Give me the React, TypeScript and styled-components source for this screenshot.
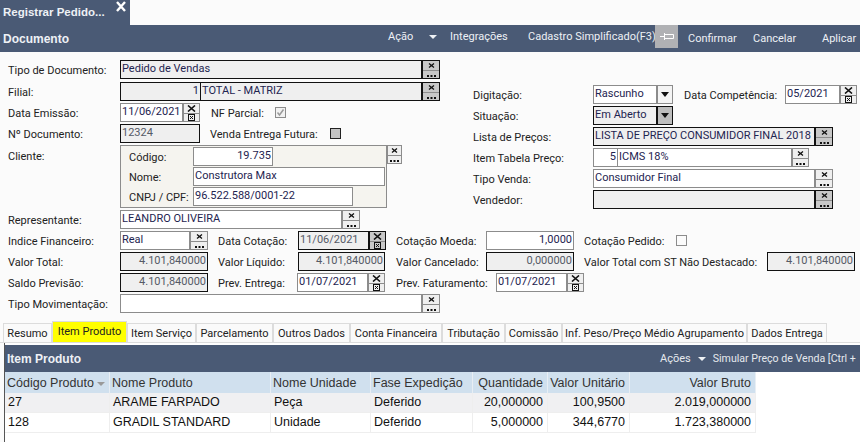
import React from "react";
import styled, { createGlobalStyle } from "styled-components";

const DARK = "#4a5a75";
const UI = `Roboto, "Liberation Sans", sans-serif`;
const ARIAL = `"Liberation Sans", Arial, sans-serif`;

const Global = createGlobalStyle`
  html, body { margin: 0; padding: 0; background: #fbfbfb; }
  #root { width: 860px; height: 442px; overflow: hidden; }
`;

const Page = styled.div`
  width: 860px; height: 442px; overflow: hidden; background: #fbfbfb;
  font-family: ${UI}; font-size: 11px; color: #222; display: flex; flex-direction: column;
`;
const TabTop = styled.div`
  width: 130px; height: 25px; background: ${DARK}; color: #fff; flex: none;
  display: flex; align-items: flex-start; box-sizing: border-box; padding-left: 3px;
`;
const TabTitle = styled.span`
  font: bold 11.5px ${ARIAL}; color: #eef1f5; line-height: 25px; width: 112px;
`;
const CloseIcon = styled.svg`
  width: 12px; height: 11px; margin-top: 1px; flex: none;
`;
const Bar = styled.div`
  height: 27px; background: ${DARK}; display: flex; align-items: center; flex: none;
  padding-left: 3px;
`;
const BarTitle = styled.span`
  font: bold 12px ${ARIAL}; color: #eef1f5; flex: 1; padding-top: 1px;
`;
const BarItem = styled.span<{ $ml: number; $up?: boolean; $w: number }>`
  color: #eef1f5; font-size: 11px; margin-left: ${(p) => p.$ml}px; width: ${(p) => p.$w}px; white-space: nowrap;
  margin-top: ${(p) => (p.$up ? -5 : 0)}px; flex: none;
`;
const Caret = styled.i<{ $ml: number; $up?: boolean }>`
  width: 0; height: 0; border-left: 4px solid transparent; border-right: 4px solid transparent;
  border-top: 4px solid #eef1f5; margin-left: ${(p) => p.$ml}px; flex: none;
  margin-top: ${(p) => (p.$up ? -4 : 0)}px;
`;
const Pin = styled.svg`
  width: 23px; height: 23px; margin: -4px 0 0 7px; flex: none; background: #b0b1b4;
`;

const Form = styled.div`
  padding: 8px 0 0 8px; display: flex; flex-direction: column; flex: none;
`;
const Top = styled.div`
  display: flex; height: 149px; margin-bottom: 1px;
`;
const LeftCol = styled.div`
  width: 465px; flex: none; display: flex; flex-direction: column; gap: 2px;
`;
const RightCol = styled.div`
  padding-top: 25px; display: flex; flex-direction: column; gap: 2px;
`;
const Row = styled.div<{ $mb?: number }>`
  display: flex; height: 19px; align-items: center; margin-bottom: ${(p) => p.$mb ?? 0}px; flex: none;
`;
const Stack = styled.div`
  display: flex; flex-direction: column; gap: 2px;
`;
const Label = styled.span<{ $w: number; $ml?: number }>`
  width: ${(p) => p.$w}px; margin-left: ${(p) => p.$ml ?? 0}px; flex: none; white-space: nowrap;
  color: #222; line-height: 19px; padding-top: 2px;
`;
const Field = styled.div<{ $w: number; $tone?: "white" | "gray" | "black" | "line"; $right?: boolean; $muted?: boolean; $ml?: number }>`
  width: ${(p) => p.$w}px; height: 19px; box-sizing: border-box; flex: none; margin-left: ${(p) => p.$ml ?? 0}px;
  border: 1px solid ${(p) => (p.$tone === "black" ? "#111" : "#8c8c8c")};
  background: ${(p) => (p.$tone === "black" || p.$tone === "gray" ? "#efefef" : "#fff")};
  color: ${(p) => (p.$muted ? "#555a66" : "#1e2450")};
  text-align: ${(p) => (p.$right ? "right" : "left")};
  padding: 0 1px; line-height: 16px; font-size: 11px; white-space: nowrap; overflow: hidden;
`;
const Joined = styled(Field)`
  border-right-width: 0;
`;
const BtnWrap = styled.div<{ $w?: number; $dark?: boolean; $shade?: boolean }>`
  width: ${(p) => p.$w ?? 18}px; height: 19px; box-sizing: border-box; flex: none; display: grid; grid-template-rows: 9px 1fr;
  border: 1px solid ${(p) => (p.$dark ? "#111" : "#8c8c8c")};
  background: ${(p) => (p.$shade ? "#c8c8c8" : "#efefef")};
`;
const BtnCell = styled.div<{ $dark?: boolean }>`
  display: flex; align-items: center; justify-content: center; color: #111;
  & + & { border-top: 1px solid ${(p) => (p.$dark ? "#111" : "#8c8c8c")}; }
`;
const Glyph = styled.svg`
  display: block; flex: none;
`;

const XIcon = ({ big }: { big?: boolean }) =>
  big ? (
    <Glyph width="9" height="7" viewBox="0 0 9 7"><path d="M1 0.5 L8 6.5 M8 0.5 L1 6.5" stroke="#111" strokeWidth="1.6" fill="none" /></Glyph>
  ) : (
    <Glyph width="7" height="5" viewBox="0 0 7 5"><path d="M1 0.5 L6 4.5 M6 0.5 L1 4.5" stroke="#111" strokeWidth="1.3" fill="none" /></Glyph>
  );
const Dots = () => (
  <Glyph width="9" height="7" viewBox="0 0 9 7"><path d="M0 4h2v2H0zM3.5 4h2v2h-2zM7 4h2v2H7z" fill="#111" /></Glyph>
);
const Cal = () => (
  <Glyph width="7" height="7" viewBox="0 0 7 7"><rect x="0.5" y="0.5" width="6" height="6" fill="none" stroke="#111" /><path d="M2 2 L5 5 M5 2 L2 5" stroke="#111" /></Glyph>
);

const Buttons = ({ w, dark, shade }: { w?: number; dark?: boolean; shade?: boolean }) => (
  <BtnWrap $w={w} $dark={dark} $shade={shade}>
    <BtnCell $dark={dark}><XIcon /></BtnCell>
    <BtnCell $dark={dark}><Dots /></BtnCell>
  </BtnWrap>
);
const DateButtons = ({ w, shade }: { w?: number; shade?: boolean }) => (
  <BtnWrap $w={w} $dark={shade} $shade={shade}>
    <BtnCell $dark={shade}><XIcon big /></BtnCell>
    <BtnCell $dark={shade}><Cal /></BtnCell>
  </BtnWrap>
);
const DropBtn = styled.div<{ $dark?: boolean }>`
  width: 16px; height: 19px; box-sizing: border-box; flex: none; display: flex; align-items: center; justify-content: center;
  border: 1px solid ${(p) => (p.$dark ? "#111" : "#8c8c8c")};
  background: ${(p) => (p.$dark ? "#bdbdbd" : "#f4f4f4")};
  &::before { content: ""; border-left: 4px solid transparent; border-right: 4px solid transparent; border-top: 5px solid #111; }
`;
const Check = styled.div<{ $ml?: number; $fill?: string; $dark?: boolean }>`
  width: 11px; height: 11px; box-sizing: border-box; flex: none; margin-left: ${(p) => p.$ml ?? 0}px;
  border: 1px solid ${(p) => (p.$dark ? "#222" : "#8c8c8c")}; background: ${(p) => p.$fill ?? "transparent"};
  display: flex; align-items: center; justify-content: center;
`;

const ClientBox = styled.div`
  width: 267px; height: 63px; box-sizing: border-box; flex: none; border: 1px solid #8c8c8c; background: #f5f4ef;
  padding: 1px 0 0 8px; display: flex; flex-direction: column; gap: 1px;
`;
const ClientRow = styled.div`
  display: flex; height: 19px; align-items: center; flex: none;
`;
const ClientSection = styled.div`
  display: flex; align-items: flex-start; height: 63px; flex: none;
`;

const Tabs = styled.div`
  margin-top: 8px; height: 21px; display: flex; align-items: flex-end; padding-left: 3px; flex: none;
  border-bottom: 1px solid #dcdcdc; box-sizing: content-box;
`;
const TabBtn = styled.div<{ $w: number; $on?: boolean }>`
  width: ${(p) => p.$w}px; height: ${(p) => (p.$on ? 21 : 19)}px; box-sizing: border-box; flex: none; text-align: center;
  border: 1px solid #dcdcdc; border-bottom: 0; white-space: nowrap;
  background: ${(p) => (p.$on ? "#ffff00" : "#fafafa")}; color: #222; font-size: 11px;
  line-height: 20px;
`;
const Panel = styled.div`
  margin-left: 4px; border-left: 1px solid #555; padding-top: 2px; flex: 1; display: flex; flex-direction: column; background: #fff;
`;
const PanelBar = styled.div`
  height: 27px; background: ${DARK}; display: flex; align-items: center; padding-left: 2px; flex: none; white-space: nowrap; overflow: hidden;
`;
const PanelTitle = styled.span`
  font: bold 12px ${ARIAL}; color: #eef1f5; width: 653px; flex: none;
`;
const PanelAction = styled.span<{ $ml?: number; $size?: number }>`
  color: #e6e9ee; font-size: ${(p) => p.$size ?? 11}px; margin-left: ${(p) => p.$ml ?? 0}px; flex: none;
`;
const Grid = styled.div`
  width: 751px; display: grid; grid-template-columns: 105px 161px 100px 102px 75px 82px 126px;
  font: 12.5px ${ARIAL}; color: #111; flex: none;
`;
const Th = styled.div<{ $right?: boolean }>`
  height: 21px; line-height: 20px; background: #d0e0ee; color: #333; white-space: nowrap; border-right: 1px solid #e8eef4;
  padding: 0 4px 0 2px; box-sizing: border-box; text-align: ${(p) => (p.$right ? "right" : "left")};
  display: flex; align-items: center; justify-content: ${(p) => (p.$right ? "flex-end" : "space-between")};
`;
const Td = styled.div<{ $right?: boolean; $alt?: boolean }>`
  height: 20px; line-height: 19px; box-sizing: border-box; white-space: nowrap; padding: 0 4px 0 3px;
  background: ${(p) => (p.$alt ? "#f0f0f2" : "#fff")}; border-right: 1px solid #eeeeee; border-bottom: 1px solid #eeeeee;
  text-align: ${(p) => (p.$right ? "right" : "left")};
`;
const SortArrow = styled.i`
  border-left: 4px solid transparent; border-right: 4px solid transparent; border-top: 4px solid #999; flex: none; margin-top: 2px;
`;

const tabs: [string, number, boolean?][] = [
  ["Resumo", 49], ["Item Produto", 75, true], ["Item Serviço", 69], ["Parcelamento", 77], ["Outros Dados", 77],
  ["Conta Financeira", 92], ["Tributação", 63], ["Comissão", 57], ["Inf. Peso/Preço Médio Agrupamento", 185], ["Dados Entrega", 80],
];
const heads: [string, boolean][] = [
  ["Nome Produto", false], ["Nome Unidade", false], ["Fase Expedição", false], ["Quantidade", true], ["Valor Unitário", true], ["Valor Bruto", true],
];
const rows = [
  ["27", "ARAME FARPADO", "Peça", "Deferido", "20,000000", "100,9500", "2.019,000000"],
  ["128", "GRADIL STANDARD", "Unidade", "Deferido", "5,000000", "344,6770", "1.723,380000"],
];

export default function App() {
  return (
    <Page>
      <Global />
      <TabTop>
        <TabTitle>Registrar Pedido...</TabTitle>
        <CloseIcon viewBox="0 0 12 11"><path d="M2 1 L10 10 M10 1 L2 10" stroke="#fff" strokeWidth="2.4" /></CloseIcon>
      </TabTop>
      <Bar>
        <BarTitle>Documento</BarTitle>
        <BarItem $ml={0} $up $w={26}>Ação</BarItem>
        <Caret $ml={15} $up />
        <BarItem $ml={13} $up $w={56}>Integrações</BarItem>
        <BarItem $ml={22} $up $w={120}>Cadastro Simplificado(F3)</BarItem>
        <Pin viewBox="0 0 23 23"><path d="M5 11.5h5M9.5 8v7M10 9.5h8.5v4H10" stroke="#fff" fill="none" /></Pin>
        <BarItem $ml={10} $w={44}>Confirmar</BarItem>
        <BarItem $ml={21} $w={42}>Cancelar</BarItem>
        <BarItem $ml={27} $w={38}>Aplicar</BarItem>
      </Bar>
      <Form>
        <Top>
          <LeftCol>
            <Row $mb={1}>
              <Label $w={112}>Tipo de Documento:</Label>
              <Field $w={302} $tone="black">Pedido de Vendas</Field>
              <Buttons dark shade />
            </Row>
            <Row>
              <Label $w={112}>Filial:</Label>
              <Joined $w={80} $tone="black" $right>1</Joined>
              <Field $w={222} $tone="black">TOTAL - MATRIZ</Field>
              <Buttons dark shade />
            </Row>
            <Row>
              <Label $w={112}>Data Emissão:</Label>
              <Field $w={63}>11/06/2021</Field>
              <DateButtons w={17} />
              <Label $w={64} $ml={11}>NF Parcial:</Label>
              <Check $fill="#f2f2f2">
                <Glyph width="9" height="9" viewBox="0 0 9 9"><path d="M1.5 4.5 L3.5 7 L7.5 1.5" stroke="#9a9a9a" strokeWidth="1.5" fill="none" /></Glyph>
              </Check>
            </Row>
            <Row>
              <Label $w={112}>Nº Documento:</Label>
              <Field $w={80} $tone="black" $muted>12324</Field>
              <Label $w={120} $ml={10}>Venda Entrega Futura:</Label>
              <Check $dark $fill="#c4c4c4" />
            </Row>
            <ClientSection>
              <Label $w={112}>Cliente:</Label>
              <ClientBox>
                <ClientRow>
                  <Label $w={64}>Código:</Label>
                  <Field $w={80} $right>19.735</Field>
                </ClientRow>
                <ClientRow>
                  <Label $w={64}>Nome:</Label>
                  <Field $w={192}>Construtora Max</Field>
                </ClientRow>
                <ClientRow>
                  <Label $w={64}>CNPJ / CPF:</Label>
                  <Field $w={160}>96.522.588/0001-22</Field>
                </ClientRow>
              </ClientBox>
              <Buttons w={15} />
            </ClientSection>
          </LeftCol>
          <RightCol>
            <Row>
              <Label $w={120}>Digitação:</Label>
              <Field $w={64}>Rascunho</Field>
              <DropBtn />
              <Label $w={101} $ml={11}>Data Competência:</Label>
              <Field $w={55}>05/2021</Field>
              <DateButtons w={17} />
            </Row>
            <Row>
              <Label $w={120}>Situação:</Label>
              <Field $w={64} $tone="black">Em Aberto</Field>
              <DropBtn $dark />
            </Row>
            <Row>
              <Label $w={120}>Lista de Preços:</Label>
              <Field $w={222} $tone="black">LISTA DE PREÇO CONSUMIDOR FINAL 2018</Field>
              <Buttons dark shade />
            </Row>
            <Row>
              <Label $w={120}>Item Tabela Preço:</Label>
              <Joined $w={24} $right>5</Joined>
              <Field $w={175}>ICMS 18%</Field>
              <Buttons w={17} />
            </Row>
            <Row>
              <Label $w={120}>Tipo Venda:</Label>
              <Field $w={222}>Consumidor Final</Field>
              <Buttons />
            </Row>
            <Row>
              <Label $w={120}>Vendedor:</Label>
              <Field $w={222} $tone="black" />
              <Buttons dark shade />
            </Row>
          </RightCol>
        </Top>
        <Stack>
          <Row>
            <Label $w={112}>Representante:</Label>
            <Field $w={222}>LEANDRO OLIVEIRA</Field>
            <Buttons />
          </Row>
          <Row>
            <Label $w={112}>Indice Financeiro:</Label>
            <Field $w={70}>Real</Field>
            <Buttons />
            <Label $w={80} $ml={10}>Data Cotação:</Label>
            <Field $w={71} $tone="black" $muted>11/06/2021</Field>
            <DateButtons w={17} shade />
            <Label $w={90} $ml={10}>Cotação Moeda:</Label>
            <Field $w={88} $right>1,0000</Field>
            <Label $w={92} $ml={10}>Cotação Pedido:</Label>
            <Check />
          </Row>
          <Row>
            <Label $w={112}>Valor Total:</Label>
            <Field $w={88} $tone="black" $right $muted>4.101,840000</Field>
            <Label $w={80} $ml={10}>Valor Líquido:</Label>
            <Field $w={87} $tone="black" $right $muted>4.101,840000</Field>
            <Label $w={90} $ml={11}>Valor Cancelado:</Label>
            <Field $w={88} $tone="black" $right $muted>0,000000</Field>
            <Label $w={183} $ml={10}>Valor Total com ST Não Destacado:</Label>
            <Field $w={88} $tone="black" $right $muted>4.101,840000</Field>
          </Row>
          <Row>
            <Label $w={112}>Saldo Previsão:</Label>
            <Field $w={88} $tone="black" $right $muted>4.101,840000</Field>
            <Label $w={79} $ml={10}>Prev. Entrega:</Label>
            <Field $w={71}>01/07/2021</Field>
            <DateButtons w={17} />
            <Label $w={100} $ml={11}>Prev. Faturamento:</Label>
            <Field $w={71}>01/07/2021</Field>
            <DateButtons w={17} />
          </Row>
          <Row>
            <Label $w={112}>Tipo Movimentação:</Label>
            <Field $w={302} />
            <Buttons />
          </Row>
        </Stack>
      </Form>
      <Tabs>
        {tabs.map(([t, w, on]) => (
          <TabBtn key={t} $w={w} $on={on}>{t}</TabBtn>
        ))}
      </Tabs>
      <Panel>
        <PanelBar>
          <PanelTitle>Item Produto</PanelTitle>
          <PanelAction>Ações</PanelAction>
          <Caret $ml={7} />
          <PanelAction $ml={7} $size={10.6}>Simular Preço de Venda [Ctrl +</PanelAction>
        </PanelBar>
        <Grid>
          <Th>Código Produto<SortArrow /></Th>
          {heads.map(([h, r]) => (
            <Th key={h} $right={r}>{h}</Th>
          ))}
          {rows.map((r, i) =>
            r.map((c, j) => (
              <Td key={i + "-" + j} $right={j > 3} $alt={i === 0}>{c}</Td>
            ))
          )}
        </Grid>
      </Panel>
    </Page>
  );
}
